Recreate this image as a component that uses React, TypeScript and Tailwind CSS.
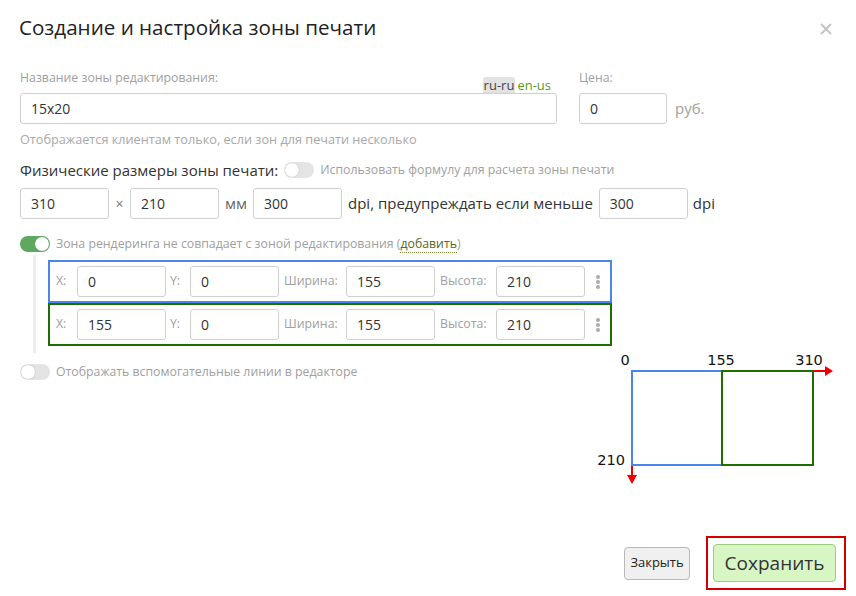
import { FC } from 'react';

const font = { fontFamily: '"Open Sans", "Noto Sans", sans-serif' };

const Toggle: FC<{ on?: boolean }> = ({ on }) => (
  <span
    className={`relative inline-flex h-[16px] w-[30px] shrink-0 items-center rounded-full ${
      on ? 'bg-[#5fa85f]' : 'bg-[#e4e4e4]'
    }`}
  >
    <span
      className={`absolute top-[1px] h-[14px] w-[14px] rounded-full bg-white shadow-[0_0_1px_rgba(0,0,0,0.3)] ${
        on ? 'left-[15px]' : 'left-[1px]'
      }`}
    />
  </span>
);

const Field: FC<{ value: string; className?: string }> = ({ value, className = '' }) => (
  <div
    className={`flex h-[31px] items-center rounded-[3px] border border-[#cfcfcf] bg-white px-[10px] text-[14px] text-[#333] ${className}`}
  >
    {value}
  </div>
);

const ZoneRow: FC<{ x: string; border: string }> = ({ x, border }) => (
  <div className={`flex h-[43px] w-[564px] items-center border-2 pl-[6px] pr-[10px] text-[12.3px] text-[#a0a0a0] ${border}`}>
    <span className="w-[21px]">X:</span>
    <Field value={x} className="w-[89px]" />
    <span className="ml-[4px] w-[20px]">Y:</span>
    <Field value="0" className="w-[89px]" />
    <span className="ml-[5px] w-[62px]">Ширина:</span>
    <Field value="155" className="w-[89px]" />
    <span className="ml-[5px] w-[56px]">Высота:</span>
    <Field value="210" className="w-[89px]" />
    <span className="ml-auto flex flex-col gap-[1px]">
      <span className="h-[4px] w-[4px] rounded-full bg-[#aaa]" />
      <span className="h-[4px] w-[4px] rounded-full bg-[#aaa]" />
      <span className="h-[4px] w-[4px] rounded-full bg-[#aaa]" />
    </span>
  </div>
);

const Diagram: FC = () => (
  <svg width="240" height="142" viewBox="0 0 240 142" className="-mt-[5px] ml-auto shrink-0">
    <g fontFamily="Verdana, 'DejaVu Sans', sans-serif" fontSize="14.5" fill="#111">
      <text x="29" y="17" textAnchor="middle">0</text>
      <text x="125" y="17" textAnchor="middle">155</text>
      <text x="213" y="17" textAnchor="middle">310</text>
      <text x="29" y="117" textAnchor="end">210</text>
    </g>
    <rect x="36" y="23" width="90" height="94" fill="none" stroke="#4a86e8" strokeWidth="2" />
    <rect x="126" y="23" width="91" height="94" fill="none" stroke="#1d6f00" strokeWidth="2" />
    <line x1="218" y1="23" x2="230" y2="23" stroke="#e00" strokeWidth="2" />
    <polygon points="229,18 237,23 229,28" fill="#e00" />
    <line x1="36" y1="118" x2="36" y2="128" stroke="#e00" strokeWidth="2" />
    <polygon points="31,127 41,127 36,136" fill="#e00" />
  </svg>
);

export default function App() {
  return (
    <div style={font} className="flex h-[596px] w-[856px] flex-col bg-white text-[#333]">
      <div className="relative pl-[19px] pt-[12px]">
        <h1 className="h-[30px] text-[20.6px] font-normal leading-[30px] text-[#222]">
          Создание и настройка зоны печати
        </h1>
        <svg width="12" height="12" viewBox="0 0 12 12" className="absolute right-[24px] top-[23px]">
          <path d="M1 1L11 11M11 1L1 11" stroke="#c4c4c4" strokeWidth="2" />
        </svg>
      </div>

      <div className="px-[20px]">
        <div className="mt-[28px] flex gap-[22px]">
          <div className="w-[537px]">
            <div className="flex h-[23px] justify-between">
              <span className="text-[12.3px] leading-[16px] text-[#a0a0a0]">Название зоны редактирования:</span>
              <span className="flex items-end gap-[2px] self-end text-[13px] leading-[16px]">
                <span className="rounded-t-[3px] bg-[#e2e2e2] px-[1px] text-[#444]">ru-ru</span>
                <span className="pr-[6px] text-[#5b9a17]">en-us</span>
              </span>
            </div>
            <Field value="15x20" />
          </div>
          <div>
            <div className="h-[23px] text-[12.3px] leading-[16px] text-[#a0a0a0]">Цена:</div>
            <div className="flex items-center gap-[8px]">
              <Field value="0" className="w-[88px]" />
              <span className="text-[15px] text-[#a0a0a0]">руб.</span>
            </div>
          </div>
        </div>

        <div className="mt-[7px] text-[12.7px] leading-[16px] text-[#a8a8a8]">
          Отображается клиентам только, если зон для печати несколько
        </div>

        <div className="mt-[13px] flex h-[20px] items-center gap-[6px]">
          <span className="text-[15px] text-[#333]">Физические размеры зоны печати:</span>
          <Toggle />
          <span className="text-[12.3px] text-[#a0a0a0]">Использовать формулу для расчета зоны печати</span>
        </div>

        <div className="mt-[8px] flex items-center text-[15px]">
          <Field value="310" className="w-[89px]" />
          <span className="w-[21px] text-center text-[14px] text-[#777]">×</span>
          <Field value="210" className="w-[89px]" />
          <span className="mx-[6px] text-[#666]">мм</span>
          <Field value="300" className="w-[89px]" />
          <span className="mx-[6px] text-[#333]">dpi, предупреждать если меньше</span>
          <Field value="300" className="w-[89px]" />
          <span className="ml-[5px] text-[#333]">dpi</span>
        </div>

        <div className="mt-[17px] flex h-[16px] items-center gap-[6px] text-[12.3px] text-[#a0a0a0]">
          <Toggle on />
          <span>
            Зона рендеринга не совпадает с зоной редактирования (
            <span className="border-b border-dotted border-[#7a8a3a] text-[#55661f]">добавить</span>)
          </span>
        </div>

        <div className="ml-[13px] mt-[3px] border-l-[3px] border-[#eeeeee] pb-[7px] pl-[12px] pt-[5px]">
          <ZoneRow x="0" border="border-[#4a86e8]" />
          <ZoneRow x="155" border="border-[#1d6f00]" />
        </div>

        <div className="flex">
          <div className="mt-[11px] flex h-[16px] items-center gap-[6px] text-[12.3px] text-[#a0a0a0]">
            <Toggle />
            <span>Отображать вспомогательные линии в редакторе</span>
          </div>
          <Diagram />
        </div>
      </div>

      <div className="mt-auto flex items-center justify-end gap-[16px] pb-[6px] pr-[10px]">
        <button className="h-[33px] w-[66px] rounded-[4px] border border-[#b9b9b9] bg-[#f0f0f0] text-[13px] text-[#222]">
          Закрыть
        </button>
        <div className="border-2 border-[#d40000] pb-[6px] pl-[5px] pr-[8px] pt-[6px]">
          <button className="h-[38px] w-[123px] rounded-[4px] border border-[#9fcc7f] bg-[#d8f5c4] text-[19px] text-[#333]">
            Сохранить
          </button>
        </div>
      </div>
    </div>
  );
}
